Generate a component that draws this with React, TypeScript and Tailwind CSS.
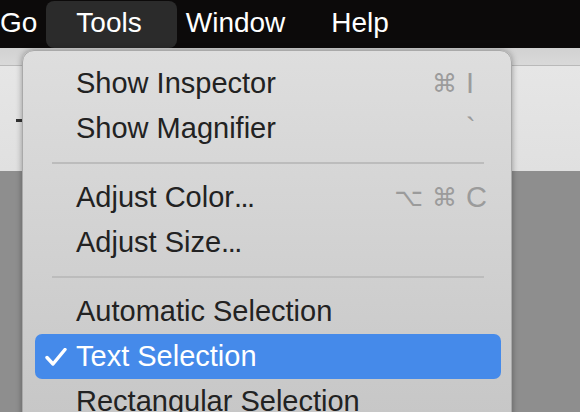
import React from 'react';

type Item = { label: string; dots?: boolean; mods?: string[]; keyChar?: string; checked?: boolean; active?: boolean };

const groups: Item[][] = [
  [
    { label: 'Show Inspector', mods: ['⌘'], keyChar: 'I' },
    { label: 'Show Magnifier', keyChar: '`' },
  ],
  [
    { label: 'Adjust Color', dots: true, mods: ['⌥', '⌘'], keyChar: 'C' },
    { label: 'Adjust Size', dots: true },
  ],
  [
    { label: 'Automatic Selection' },
    { label: 'Text Selection', checked: true, active: true },
    { label: 'Rectangular Selection' },
  ],
];

const Check = () => (
  <svg width="22" height="18" viewBox="0 0 22 18" fill="none">
    <path d="M2 9.5 L8 16 L20 1.5" stroke="white" strokeWidth="3.4" strokeLinecap="round" strokeLinejoin="round" />
  </svg>
);

const MenuRow = ({ item }: { item: Item }) => (
  <div
    className={`flex items-center h-[45px] ml-[12px] mr-[10px] rounded-[7px] ${
      item.active ? 'bg-[#458aea] text-white' : 'text-[#222222]'
    }`}
  >
    <div className="w-[41px] pl-[10px] flex items-center">{item.checked && <Check />}</div>
    <span className="flex-1 leading-[45px] whitespace-nowrap">
      {item.label}
      {item.dots && <span className="tracking-[-1.5px]">...</span>}
    </span>
    <span className="flex items-center gap-[9px] text-[#9b9b9b] text-[25px] leading-[45px]">
      {item.mods?.map((m) => (
        <span key={m}>{m}</span>
      ))}
    </span>
    <span className="w-[44px] pl-[9px] text-[#9b9b9b] leading-[45px]">{item.keyChar}</span>
  </div>
);

export default function App() {
  return (
    <div
      className="relative w-[580px] h-[412px] overflow-hidden bg-[#8e8e8e]"
      style={{ fontFamily: '"Liberation Sans", "DejaVu Sans", sans-serif' }}
    >
      {/* menu bar */}
      <div className="flex items-center h-[48px] bg-[#0c0a0a] text-white text-[28px] ml-[-20px] pb-[3px]">
        <span className="px-[20px]">Go</span>
        <span className="ml-[-11px] mr-[-10px] pl-[30px] pr-[35px] h-[47px] mt-[3px] leading-[44px] rounded-[8px] bg-[#2b2b2b]">
          Tools
        </span>
        <span className="pl-[19px] pr-[24px]">Window</span>
        <span className="px-[22px]">Help</span>
      </div>

      {/* window behind */}
      <div className="h-[17px] bg-gradient-to-b from-[#d2d2d2] to-[#d9d9d9]" />
      <div className="h-[1px] bg-[#b9b9b9]" />
      <div className="relative h-[105px] bg-gradient-to-b from-[#e6e6e6] to-[#e0e0e0]">
        <div className="absolute left-[16px] top-[53px] w-[10px] h-[3px] bg-[#333333]" />
      </div>

      {/* Tools menu */}
      <div className="absolute left-[22px] top-[50px] w-[490px] h-[380px] rounded-[12px] border border-[#a9a9a9] bg-gradient-to-b from-[#dedede] to-[#c6c6c6] shadow-[0_0_6px_rgba(0,0,0,0.35)] pt-[10px] text-[29px]">
        {groups.map((g, gi) => (
          <div key={gi}>
            {gi > 0 && (
              <div className="h-[24px] flex items-center pl-[29px] pr-[27px]">
                <div className="h-[2px] w-full bg-[#bcbcbc]" />
              </div>
            )}
            {g.map((it) => (
              <MenuRow key={it.label} item={it} />
            ))}
          </div>
        ))}
      </div>
    </div>
  );
}
